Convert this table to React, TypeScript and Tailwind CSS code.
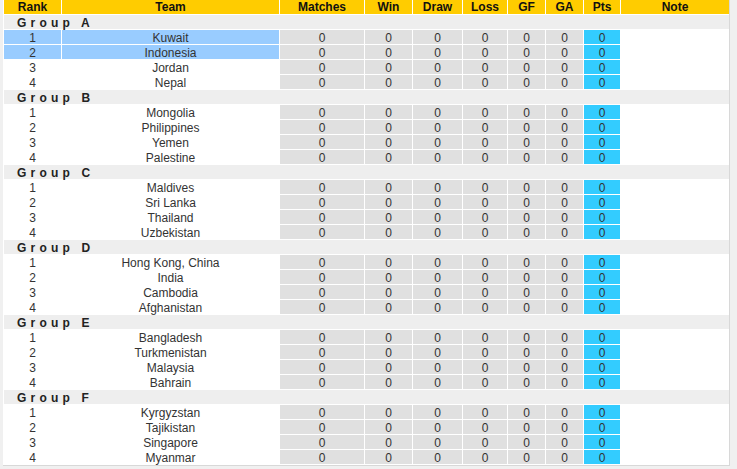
const groups = [
  { name: 'A', teams: ['Kuwait', 'Indonesia', 'Jordan', 'Nepal'] },
  { name: 'B', teams: ['Mongolia', 'Philippines', 'Yemen', 'Palestine'] },
  { name: 'C', teams: ['Maldives', 'Sri Lanka', 'Thailand', 'Uzbekistan'] },
  { name: 'D', teams: ['Hong Kong, China', 'India', 'Cambodia', 'Afghanistan'] },
  { name: 'E', teams: ['Bangladesh', 'Turkmenistan', 'Malaysia', 'Bahrain'] },
  { name: 'F', teams: ['Kyrgyzstan', 'Tajikistan', 'Singapore', 'Myanmar'] },
];

const headers = ['Rank', 'Team', 'Matches', 'Win', 'Draw', 'Loss', 'GF', 'GA', 'Pts', 'Note'];

export default function App() {
  return (
    <div
      className="w-[737px] h-[469px] bg-[#f0f0f0] overflow-hidden text-[12px] leading-[14px]"
      style={{ fontFamily: '"Liberation Sans", Arial, sans-serif' }}
    >
      <div className="ml-[3px] w-[727px] bg-white border-r border-b border-[#d8d8d8] pl-px pb-px">
        <div className="grid grid-cols-[57px_217px_84px_47px_49px_44px_37px_37px_36px_108px] gap-px auto-rows-[14px]">
          {headers.map((h) => (
            <div key={h} className="bg-[#ffcc00] text-[#111] font-bold text-center">
              {h}
            </div>
          ))}
          {groups.map((g) => (
            <Group key={g.name} name={g.name} teams={g.teams} />
          ))}
        </div>
      </div>
    </div>
  );
}

function Group({ name, teams }: { name: string; teams: string[] }) {
  return (
    <>
      <div className="col-span-10 bg-[#eeeeee] font-bold text-[#222] pl-[13px] pt-px tracking-[4.2px]">
        Group {name}
      </div>
      {teams.map((t, i) => {
        const hl = name === 'A' && i < 2;
        return (
          <Row key={t} rank={i + 1} team={t} hl={hl} />
        );
      })}
    </>
  );
}

function Row({ rank, team, hl }: { rank: number; team: string; hl: boolean }) {
  const side = hl ? 'bg-[#99ccff]' : 'bg-white';
  return (
    <>
      <div className={`${side} text-center text-[#333] pt-px`}>{rank}</div>
      <div className={`${side} text-center text-[#333] pt-px whitespace-nowrap`}>{team}</div>
      {[0, 1, 2, 3, 4, 5].map((k) => (
        <div key={k} className="bg-[#e0e0e0] text-center text-[#333] pt-px">0</div>
      ))}
      <div className="bg-[#33ccff] text-center text-[#333] pt-px">0</div>
      <div className="bg-white" />
    </>
  );
}
